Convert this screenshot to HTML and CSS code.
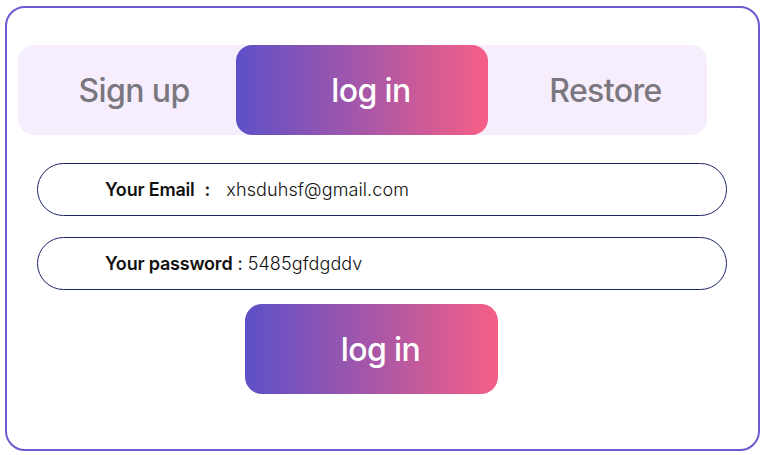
FILE: index.html
```html
<!DOCTYPE html>
<html>
<head>
<meta charset="utf-8">
<link rel="stylesheet" href="styles.css">
</head>
<body>
<div class="card">
  <div class="tabs">
    <div class="tab tab-signup">Sign up</div>
    <div class="tab tab-active">log in</div>
    <div class="tab tab-restore">Restore</div>
  </div>
  <div class="field field-email">
    <span class="label">Your Email</span><span class="colon">:</span><span class="value">xhsduhsf@gmail.com</span>
  </div>
  <div class="field field-pass">
    <span class="label">Your password</span><span class="colon2">:</span><span class="value">5485gfdgddv</span>
  </div>
  <div class="btn">log in</div>
</div>
</body>
</html>
```
FILE: styles.css
```css
html, body { margin: 0; padding: 0; background: #ffffff; }
body { width: 770px; height: 455px; overflow: hidden; }
.card {
  box-sizing: border-box;
  margin: 6px 0 0 5px;
  width: 755px;
  height: 445px;
  border: 2px solid #6b5bd2;
  border-radius: 20px;
  padding: 37px 0 0 11px;
  display: flex;
  flex-direction: column;
  align-items: flex-start;
  background: #fff;
}
.tabs {
  width: 689px;
  height: 90px;
  background: #f7eefd;
  border-radius: 16px;
  display: flex;
  font-family: Inter, "Noto Sans", sans-serif;
  font-size: 32px;
  font-weight: 500;
  letter-spacing: -0.6px;
}
.tab { display: flex; align-items: center; justify-content: center; height: 90px; box-sizing: border-box; }
.tab-signup { width: 218px; color: #7b777f; padding-left: 14px; }
.tab-active {
  width: 252px;
  color: #ffffff;
  border-radius: 16px;
  background: linear-gradient(90deg, #5d50c8 0%, #a657a8 50%, #f65f86 100%);
  padding-left: 18px;
}
.tab-restore { width: 219px; color: #7b777f; padding-left: 16px; }
.field {
  box-sizing: border-box;
  margin-left: 19px;
  width: 690px;
  height: 53px;
  border: 1px solid #1d2566;
  border-radius: 27px;
  display: flex;
  align-items: center;
  padding-left: 67px;
  font-family: Inter, "Noto Sans", sans-serif;
  font-size: 18px;
  color: #111;
}
.field-email { margin-top: 28px; }
.field-pass { margin-top: 21px; }
.label { font-weight: 600; letter-spacing: -0.2px; }
.colon { font-weight: 600; margin: 0 16px 0 10px; }
.colon2 { margin: 0 5px 0 5px; }
.value { font-weight: 300; letter-spacing: 0.1px; }
.btn {
  margin: 14px 0 0 227px;
  width: 253px;
  height: 90px;
  border-radius: 17px;
  background: linear-gradient(90deg, #5d50c8 0%, #a657a8 50%, #f65f86 100%);
  color: #fff;
  display: flex;
  align-items: center;
  justify-content: center;
  padding-left: 18px;
  box-sizing: border-box;
  font-family: Inter, "Noto Sans", sans-serif;
  font-size: 32px;
  font-weight: 500;
  letter-spacing: -0.6px;
}
```
